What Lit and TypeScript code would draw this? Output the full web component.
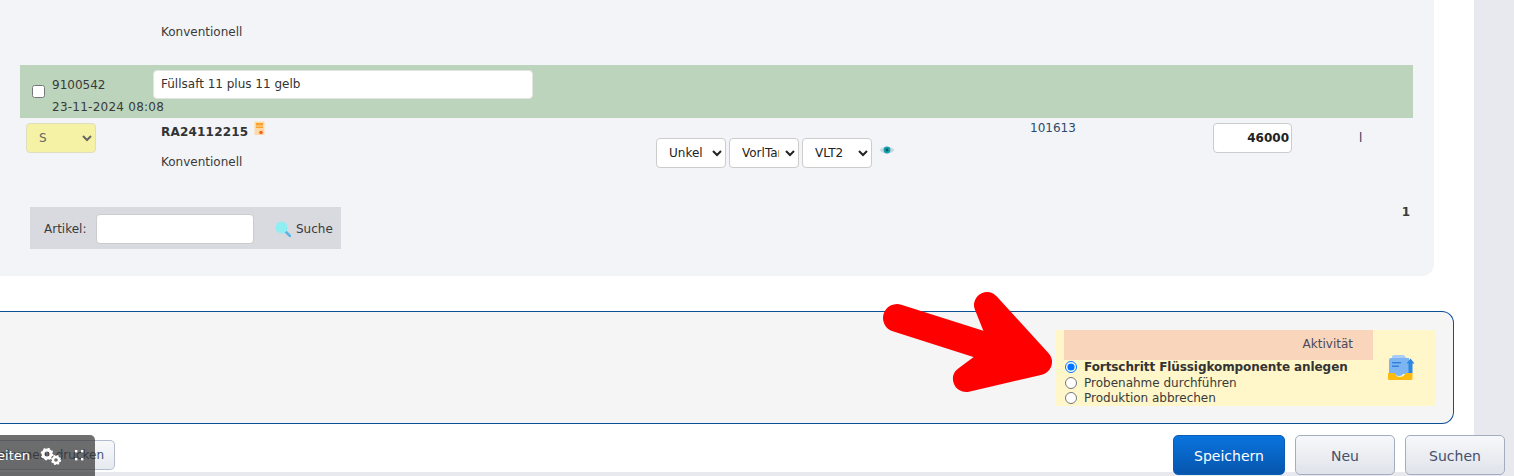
import { LitElement, html, css, svg } from "lit";
import { customElement } from "lit/decorators.js";

const certIcon = html`<svg class="cert" viewBox="0 0 11 15" width="11" height="15">
  <rect x="0.5" y="0.5" width="10" height="13.5" fill="#ffd9a3"/>
  <rect x="2" y="2" width="7" height="2.5" fill="#f9a12e"/>
  <rect x="2" y="5.5" width="7" height="1.5" fill="#f9a12e"/>
  <circle cx="7" cy="11.5" r="1.8" fill="#f4632b"/>
</svg>`;

const eyeIcon = html`<svg viewBox="0 0 16 10" width="16" height="10">
  <path d="M0.5 5C3.5 0.5 12.5 0.5 15.5 5C12.5 9.5 3.5 9.5 0.5 5Z" fill="#c4d9dd"/>
  <circle cx="8" cy="5" r="3.4" fill="#14a0ad"/>
  <circle cx="8" cy="5" r="1.4" fill="#0a5a66"/>
</svg>`;

const loupeIcon = html`<svg viewBox="0 0 16 16" width="16" height="16">
  <path d="M10 10L15 15" stroke="#58b6e8" stroke-width="2.6" stroke-linecap="round"/>
  <circle cx="6.5" cy="6.5" r="6" fill="#8eeef2"/>
</svg>`;

const inboxIcon = html`<svg viewBox="0 0 27 27" width="27" height="27">
  <path d="M4 2.5Q4 1 6 1H15Q17 1 18 4H4Z" fill="#a9cdf6"/>
  <path d="M1 6Q1 4 3 4H21V20H15Q14 22 11 22Q8 22 7 20H1Z" fill="#7db5f3"/>
  <rect x="4" y="8" width="9" height="1.4" fill="#2f7ed8"/>
  <rect x="4" y="11.5" width="7" height="1.4" fill="#2f7ed8"/>
  <path d="M22.5 4.5L26.5 9.5H24.5V19H20.5V9.5H18.5Z" fill="#2d86e0"/>
  <path d="M0 19H6.5Q8 23 12 23Q16 23 17.5 19H24.5V24.5Q24.5 26 23 26H1.5Q0 26 0 24.5Z" fill="#fdbb12"/>
</svg>`;

const gearsIcon = html`<svg viewBox="0 0 22 18" width="22" height="18">
  <circle cx="7" cy="7" r="4" fill="none" stroke="#fff" stroke-width="3"/>
  <circle cx="7" cy="7" r="5.6" fill="none" stroke="#fff" stroke-width="1.6" stroke-dasharray="2 2.4"/>
  <circle cx="16" cy="13" r="3" fill="none" stroke="#fff" stroke-width="2.4"/>
  <circle cx="16" cy="13" r="4.4" fill="none" stroke="#fff" stroke-width="1.4" stroke-dasharray="1.8 1.7"/>
</svg>`;

const gripIcon = html`<svg class="grip" viewBox="0 0 9 11" width="9" height="11" fill="#fff">
  <rect x="0" y="0" width="2.4" height="2.4"/><rect x="6" y="0" width="2.4" height="2.4"/>
  <rect x="0" y="8" width="2.4" height="2.4"/><rect x="6" y="8" width="2.4" height="2.4"/>
</svg>`;

const arrow = svg`<path d="M897 318L1032 361" stroke="#ff0000" stroke-width="28" stroke-linecap="round" fill="none"/>
  <path d="M987 305L1039 362L966 379L1005 350Z" fill="#ff0000" stroke="#ff0000" stroke-width="26" stroke-linejoin="round"/>`;

@customElement("app-root")
export class AppRoot extends LitElement {
  static styles = css`
    :host { display: block; width: 1514px; height: 476px; position: relative; overflow: hidden;
      background: #fff; font: 12px/15px "DejaVu Sans", sans-serif; color: #3a3a3a; }
    .page { display: flex; height: 476px; }
    .main { width: 1474px; flex: none; display: flex; flex-direction: column; position: relative; z-index: 1; }
    .gutter { flex: 1; background: #e8e9ee; }
    .panel { width: 1434px; height: 276px; flex: none; box-sizing: border-box; background: #f2f4f8;
      border-bottom-right-radius: 12px; padding: 25px 21px 0 20px; }
    .top-note { padding-left: 141px; height: 40px; }
    .green { height: 53px; background: #bbd4bb; display: flex; padding-left: 12px; box-sizing: border-box; }
    .green input[type=checkbox] { width: 13px; height: 13px; margin: 20px 0 0 0; flex: none; }
    .ident { width: 101px; margin-left: 7px; flex: none; padding-top: 9px; line-height: 22px; white-space: nowrap; position: relative; }
    .ident div { height: 22px; }
    .ident .date { letter-spacing: 0.25px; }
    .name { width: 380px; height: 29px; margin-top: 4.5px; box-sizing: border-box; border: 1px solid #e3e3e3; border-radius: 4px;
      background: #fff; padding: 0 7px; font: inherit; color: #333; flex: none; }
    .row { display: grid; grid-template-columns: 141px 495px 374px 183px 146px 1fr; height: 84px; }
    .pick { width: 70px; height: 30px; margin: 5px 0 0 6px; box-sizing: border-box; border: 1px solid #dfdfc0; border-radius: 4px;
      background: #f5f2a5; color: #666; font: inherit; padding-left: 8px; }
    .code { padding-top: 7px; line-height: 14px; }
    .code b { color: #333; letter-spacing: 0.2px; }
    .cert { margin: -4px 0 0 6px; vertical-align: top; }
    .type { margin-top: 16px; }
    .tanks { display: flex; gap: 3px; padding-top: 20px; align-items: flex-start; }
    .tanks select { width: 70px; height: 30px; box-sizing: border-box; border: 1px solid #ccc; border-radius: 4px;
      background: #fff; color: #222; font: inherit; padding: 0 3px 0 8px; }
    .tanks svg { margin: 7px 0 0 4px; }
    .num { color: #2b4a6b; padding-top: 3px; }
    .qty { width: 79px; height: 30px; margin-top: 5px; box-sizing: border-box; border: 1px solid #ccc; border-radius: 4px;
      background: #fff; text-align: right; font: bold 12px "DejaVu Sans", sans-serif; color: #222; padding: 0 2px; }
    .unit { color: #2b3a5b; padding-top: 13px; }
    .foot { display: flex; justify-content: space-between; align-items: flex-start; padding: 5px 3px 0 10px; }
    .search { width: 311px; height: 42px; background: #d9dae0; display: flex; align-items: center; box-sizing: border-box; padding: 2px 0 0 14px; }
    .search label { width: 52px; }
    .search input { width: 158px; height: 30px; box-sizing: border-box; border: 1px solid #ccc; border-radius: 4px; background: #fff; }
    .search svg { margin-left: 21px; }
    .search span { margin-left: 5px; }
    .page-no { font-weight: bold; line-height: 11px; }
    .bar { width: 1454px; height: 113px; flex: none; margin-top: 35px; box-sizing: border-box; border: 1px solid #0b4f96; border-left: 0;
      border-radius: 0 12px 12px 0; background: #f5f5f6; padding: 18px 17px 0 0; display: flex; justify-content: flex-end; }
    .activity { width: 380px; height: 76px; box-sizing: border-box; background: #fff6c9; padding-left: 8px; display: flex; }
    .choices { width: 309px; flex: none; padding-top: 0; }
    .head { height: 30px; background: #f8d5bb; text-align: right; line-height: 29px; padding-right: 20px; color: #4a4a5a; }
    .choice { display: flex; align-items: center; height: 15px; white-space: nowrap; }
    .choice input { width: 12px; height: 12px; margin: 0 7px 0 1px; flex: none; }
    .choice.on { font-weight: bold; color: #333; letter-spacing: -0.08px; }
    .choice.on input { margin-top: -1px; }
    .choice.off { padding-top: 1px; margin-bottom: -1px; }
    .choice.off input { margin-top: -1px; }
    .inbox { margin: 24px 0 0 15px; }
    .actions { display: flex; justify-content: space-between; align-items: flex-start; margin-top: 11px; width: 1505px; height: 41px; flex: none;
      background: linear-gradient(transparent 37px, #e8e9ee 37px); }
    .print { width: 115px; height: 30px; margin-top: 5px; box-sizing: border-box; border: 1px solid #b3bccc; border-left: 0;
      border-radius: 0 5px 5px 0; background: linear-gradient(#f8f9fb, #e6e9ee); overflow: hidden; display: flex; justify-content: flex-end;
      align-items: center; padding-right: 10px; white-space: nowrap; color: #44506a; }
    .btns { display: flex; gap: 10px; }
    .btn { width: 100px; height: 40px; box-sizing: border-box; border: 1px solid #a3adc0; border-radius: 5px; padding-top: 2px;
      background: linear-gradient(#f7f8fa, #dfe3ea); color: #44506a; font: 14px "DejaVu Sans", sans-serif; }
    .btn.save { width: 112px; border-color: #0a5fb4; background: linear-gradient(#0a74de, #0655ad); color: #fff; }
    .arrow { position: absolute; left: 0; top: 0; width: 1514px; height: 476px; pointer-events: none; z-index: 2; }
    .float { position: absolute; left: 0; top: 435px; width: 95px; height: 41px; border-top-right-radius: 5px; z-index: 3;
      background: rgba(50,50,50,0.7); color: #fff; display: flex; align-items: center; justify-content: flex-end;
      padding-right: 11px; box-sizing: border-box; overflow: hidden; white-space: nowrap; font-size: 13px; }
    .float span { margin-right: 10px; }
    .float svg { flex: none; }
    .grip { margin-left: 13px; }
  `;

  render() {
    return html`
      <div class="page">
        <div class="main">
          <section class="panel">
            <div class="top-note">Konventionell</div>
            <div class="green">
              <input type="checkbox" />
              <div class="ident"><div>9100542</div><div class="date">23-11-2024 08:08</div></div>
              <input class="name" .value=${"Füllsaft 11 plus 11 gelb"} />
            </div>
            <div class="row">
              <div><select class="pick"><option>S</option></select></div>
              <div class="code"><b>RA24112215</b>${certIcon}<div class="type">Konventionell</div></div>
              <div class="tanks">
                <select><option>Unkel</option></select>
                <select><option>VorlTank</option></select>
                <select><option>VLT2</option></select>
                ${eyeIcon}
              </div>
              <div class="num">101613</div>
              <div><input class="qty" .value=${"46000"} /></div>
              <div class="unit">l</div>
            </div>
            <div class="foot">
              <div class="search"><label>Artikel:</label><input />${loupeIcon}<span>Suche</span></div>
              <div class="page-no">1</div>
            </div>
          </section>
          <section class="bar">
            <div class="activity">
              <div class="choices">
                <div class="head">Aktivität</div>
                <label class="choice on"><input type="radio" name="a" checked />Fortschritt Flüssigkomponente anlegen</label>
                <label class="choice off"><input type="radio" name="a" />Probenahme durchführen</label>
                <label class="choice off"><input type="radio" name="a" />Produktion abbrechen</label>
              </div>
              <div class="inbox">${inboxIcon}</div>
            </div>
          </section>
          <div class="actions">
            <div class="print">Dokument drucken</div>
            <div class="btns">
              <button class="btn save">Speichern</button>
              <button class="btn">Neu</button>
              <button class="btn">Suchen</button>
            </div>
          </div>
        </div>
        <div class="gutter"></div>
      </div>
      <div class="float"><span>Bearbeiten</span>${gearsIcon}${gripIcon}</div>
      <svg class="arrow" viewBox="0 0 1514 476">${arrow}</svg>
    `;
  }
}
